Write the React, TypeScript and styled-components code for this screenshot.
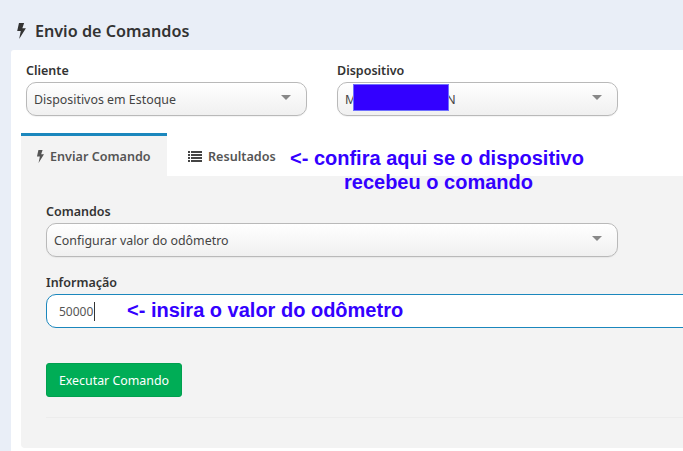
import React from 'react';
import styled, { createGlobalStyle } from 'styled-components';

const GlobalStyle = createGlobalStyle`
  html, body {
    margin: 0;
    padding: 0;
    height: 451px;
    overflow: hidden;
    background: #e9eef7;
  }
  * { box-sizing: border-box; }
`

const Page = styled.div`
  position: relative;
  width: 683px;
  height: 451px;
  padding-left: 11px;
  overflow: hidden;
  font-family: "Noto Sans", "Open Sans", sans-serif;
  color: #333;
`
const Header = styled.h1`
  display: flex;
  align-items: center;
  gap: 9px;
  height: 50px;
  margin: 0;
  padding: 12px 0 0 5px;
  font-size: 16.2px;
  font-weight: 600;
  color: #333;
`
const Panel = styled.div`
  width: 700px;
  height: 401px;
  padding: 14px 0 0 10px;
  background: #fff;
  border-radius: 3px 0 0 0;
`
const FilterRow = styled.div`
  display: flex;
  gap: 30px;
  padding-left: 5px;
`
const Field = styled.div<{ $width: number }>`
  display: flex;
  flex-direction: column;
  width: ${p => p.$width}px;
`
const Label = styled.label`
  height: 18px;
  font-size: 12.5px;
  line-height: 13px;
  font-weight: 600;
  color: #333;
`
const Select = styled.div`
  display: flex;
  align-items: center;
  justify-content: space-between;
  height: 34px;
  padding: 0 15px 0 7px;
  font-size: 12.4px;
  color: #444;
  background: linear-gradient(#fff, #f0f0f0);
  border: 1px solid #b9b9b9;
  border-radius: 10px;
  box-shadow: 0 1px 1px rgba(0, 0, 0, 0.05);
`
const HiddenGap = styled.span`
  margin-left: 90px;
`
const Caret = styled.span`
  width: 0;
  height: 0;
  margin-bottom: 3px;
  border-left: 5px solid transparent;
  border-right: 5px solid transparent;
  border-top: 5px solid #888;
`
const Tabs = styled.div`
  display: flex;
  margin-top: 17px;
  height: 43px;
`
const Tab = styled.div<{ $active?: boolean }>`
  display: flex;
  align-items: center;
  gap: 6px;
  width: ${p => (p.$active ? 146 : 130)}px;
  padding-left: ${p => (p.$active ? 15 : 21)}px;
  font-size: 12.6px;
  font-weight: 600;
  color: #555;
  background: ${p => (p.$active ? '#f3f3f3' : '#fff')};
  border-top: 3px solid ${p => (p.$active ? '#1b87bd' : 'transparent')};
`
const TabBody = styled.div`
  height: 272px;
  padding: 29px 0 0 25px;
  background: #f3f3f3;
  border-radius: 0 0 0 4px;
`
const InfoField = styled(Field)`
  margin-top: 19px;
`
const TextBox = styled.div`
  display: flex;
  align-items: center;
  height: 34px;
  padding-left: 12px;
  font-size: 12px;
  color: #555;
  background: #fff;
  border: 1px solid #1b87bd;
  border-radius: 10px 0 0 10px;
`
const CaretBar = styled.span`
  width: 1px;
  height: 19px;
  margin-left: 1px;
  background: #333;
`
const RunButton = styled.button`
  display: block;
  width: 136px;
  height: 34px;
  margin-top: 35px;
  padding: 0;
  font-family: inherit;
  font-size: 12.4px;
  color: #fff;
  background: #00ad56;
  border: 1px solid #00a04f;
  border-radius: 3px;
`
const Divider = styled.hr`
  margin: 20px 0 0;
  border: 0;
  border-top: 1px solid #ececec;
`
const Redaction = styled.div`
  position: absolute;
  left: 353px;
  top: 84px;
  width: 96px;
  height: 27px;
  background: #3300ff;
  border: 1px solid #6f6fff;
`
const Note = styled.div<{ $left: number; $top: number }>`
  position: absolute;
  left: ${p => p.$left}px;
  top: ${p => p.$top}px;
  font-family: "Liberation Sans", Arial, sans-serif;
  font-size: 20px;
  line-height: 22px;
  font-weight: 700;
  color: #3300ff;
  white-space: nowrap;
`

const Bolt = ({ size }: { size: number }) => (
  <svg width={size * 0.62} height={size} viewBox="0 0 10 16" fill="currentColor">
    <path d="M3 0h5.2L6.4 5.2H10L3.2 16l1.6-8H1.2z" />
  </svg>
)

const ListIcon = () => (
  <svg width="14" height="12" viewBox="0 0 14 12" fill="#444">
    <path d="M0 1h2v2H0zM3 1h11v2H3zM0 4h2v2H0zM3 4h11v2H3zM0 7h2v2H0zM3 7h11v2H3zM0 10h2v2H0zM3 10h11v2H3z" />
  </svg>
)

const App = () => {
  return (
    <Page>
      <GlobalStyle />
      <Header><Bolt size={16} />Envio de Comandos</Header>
      <Panel>
        <FilterRow>
          <Field $width={281}>
            <Label>Cliente</Label>
            <Select>Dispositivos em Estoque<Caret /></Select>
          </Field>
          <Field $width={281}>
            <Label>Dispositivo</Label>
            <Select><span>M<HiddenGap>N</HiddenGap></span><Caret /></Select>
          </Field>
        </FilterRow>
        <Tabs>
          <Tab $active><Bolt size={13} />Enviar Comando</Tab>
          <Tab><ListIcon />Resultados</Tab>
        </Tabs>
        <TabBody>
          <Field $width={572}>
            <Label>Comandos</Label>
            <Select>Configurar valor do odômetro<Caret /></Select>
          </Field>
          <InfoField $width={650}>
            <Label>Informação</Label>
            <TextBox>50000<CaretBar /></TextBox>
          </InfoField>
          <RunButton>Executar Comando</RunButton>
          <Divider />
        </TabBody>
      </Panel>
      <Redaction />
      <Note $left={290} $top={147}>&lt;- confira aqui se o dispositivo</Note>
      <Note $left={344} $top={171}>recebeu o comando</Note>
      <Note $left={127} $top={299}>&lt;- insira o valor do odômetro</Note>
    </Page>
  )
}

export default App;
